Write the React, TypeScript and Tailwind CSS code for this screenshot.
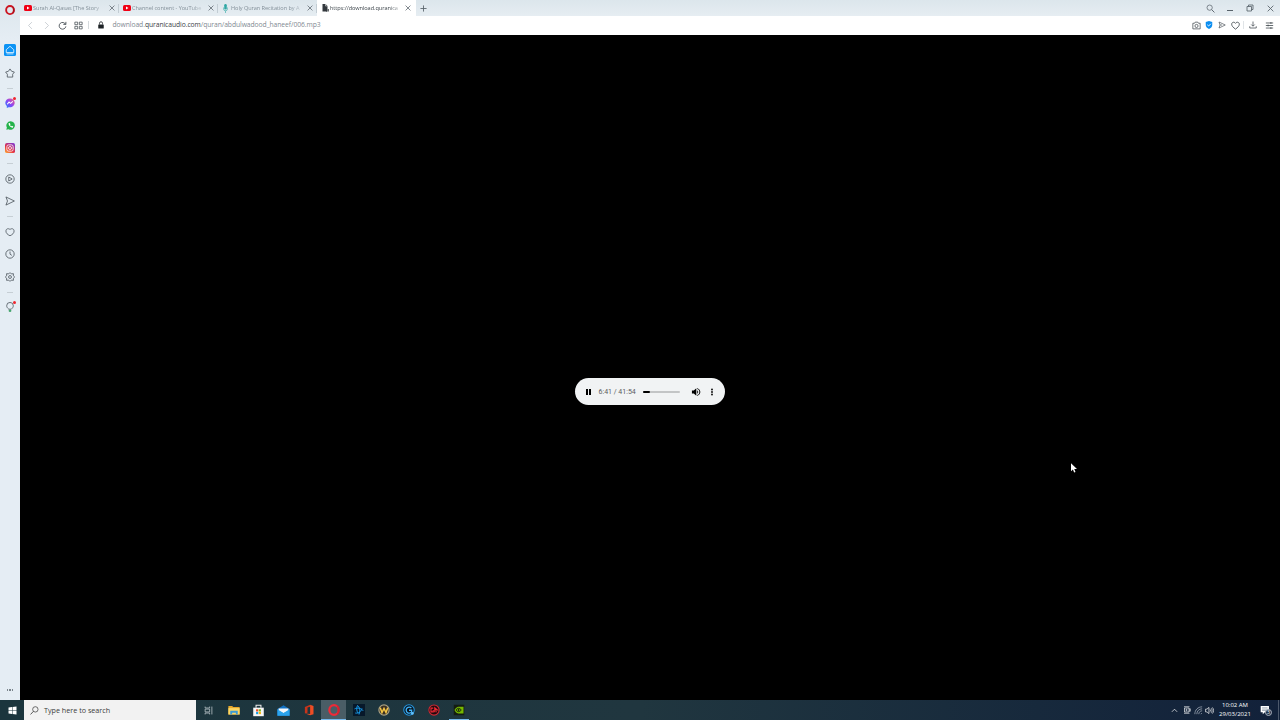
import type { ReactNode } from "react";

const SEGOE = "font-['Open_Sans','Noto_Sans',sans-serif]";

type IconProps = {
  size?: number;
  className?: string;
  children: ReactNode;
};

/** Outline icon on a 16 unit grid */
function Icon({ size = 10, className = "", children }: IconProps) {
  return (
    <svg
      width={size}
      height={size}
      viewBox="0 0 16 16"
      fill="none"
      stroke="currentColor"
      strokeWidth="1.3"
      className={`shrink-0 ${className}`}
    >
      {children}
    </svg>
  );
}

/** Opera "O" */
function OperaLogo({ size = 10, bright = false }: { size?: number; bright?: boolean }) {
  return (
    <Icon size={size}>
      <ellipse
        cx="8"
        cy="8"
        rx="6.2"
        ry="6.5"
        stroke={bright ? "#ee2a38" : "#cc1420"}
        strokeWidth="3"
      />
      <path
        stroke="none"
        fill={bright ? "#c41c29" : "#9c0c17"}
        opacity="0.6"
        d="M11.500 1C13.900 2 15.700 4.800 15.700 8s-1.800 6-4.200 7c1-2 1.300-4.500 1.300-7s-.300-5-1.300-7Z"
      />
    </Icon>
  );
}

function YoutubeIcon() {
  return (
    <svg width="8" height="6" viewBox="0 0 16 12" className="shrink-0">
      <rect width="16" height="12" rx="3" fill="#f00014" />
      <path d="M6 3.200v5.600L11 6Z" fill="#fff" />
    </svg>
  );
}

function MicIcon() {
  return (
    <svg width="5" height="9" viewBox="0 0 10 18" className="ml-px shrink-0">
      <rect x="2.500" y="0" width="5" height="11" rx="2.500" fill="#2fa7a4" />
      <path d="M1 7v2.500a4 4 0 0 0 8 0V7M5 13.500V18" stroke="#4bb3b0" strokeWidth="1.400" fill="none" />
    </svg>
  );
}

function FileIcon() {
  return (
    <svg width="7" height="8" viewBox="0 0 14 16" className="ml-px shrink-0">
      <path d="M1 0h6l4 4v11H1Z" fill="#33383d" />
      <path d="M7 0v4h4" stroke="#fff" strokeWidth="1" fill="none" />
      <path d="M9 9v6M12.500 10v5" stroke="#33383d" strokeWidth="2" />
    </svg>
  );
}

function CloseIcon({ size = 6 }: { size?: number }) {
  return (
    <Icon size={size} className="text-[#59636b]">
      <path d="M1.500 1.500l13 13M14.500 1.500l-13 13" strokeWidth="2" />
    </Icon>
  );
}

const tabs = [
  { title: "Surah Al-Qasas [The Story", icon: <YoutubeIcon /> },
  { title: "Channel content - YouTube", icon: <YoutubeIcon /> },
  { title: "Holy Quran Recitation by A", icon: <MicIcon /> },
  { title: "https://download.quranica", icon: <FileIcon />, active: true },
];

function TabBar() {
  return (
    <div className="flex h-4 items-center bg-linear-to-b from-[#dce6ec] to-[#e6edf2] text-[#59636b]">
      {tabs.map((tab) => (
        <div
          key={tab.title}
          className={`flex h-full w-[99px] shrink-0 items-center pl-1 ${
            tab.active ? "bg-white text-[#3e464c]" : "text-[#839099]"
          }`}
        >
          <div className="flex w-[9px] shrink-0 items-center">{tab.icon}</div>
          <div className="w-[74px] shrink-0 text-[5.6px] leading-4 tracking-[-0.01em] whitespace-nowrap mask-r-from-80%">
            {tab.title}
          </div>
          <div className={`ml-auto flex ${tab.active ? "pr-[5px]" : "pr-[3.5px]"}`}>
            <CloseIcon />
          </div>
          {!tab.active && <div className="h-[9px] w-px shrink-0 bg-[#c3cdd4]" />}
        </div>
      ))}
      <Icon size={7} className="ml-1">
        <path d="M8 1v14M1 8h14" strokeWidth="2" />
      </Icon>
      <div className="ml-auto flex items-center">
        <Icon size={9} className="mr-[12.5px]">
          <circle cx="6.500" cy="6.500" r="4.700" />
          <path d="M10 10l5 5" strokeWidth="1.700" />
        </Icon>
        <div className="mt-[5px] mr-[13px] h-px w-[6px] bg-[#59636b]" />
        <Icon size={8} className="mr-[13px]">
          <path d="M2 5h9v9H2ZM5 5V2h9v9h-3" strokeWidth="1.700" />
        </Icon>
        <div className="mr-[6px]">
          <CloseIcon size={7} />
        </div>
      </div>
    </div>
  );
}

function AddressBar() {
  return (
    <div className="flex h-[19px] items-center bg-white pb-px text-[#3f474d]">
      <Icon size={9} className="ml-[6px] text-[#b9c0c5]">
        <path d="M10.500 2l-6 6 6 6" />
      </Icon>
      <Icon size={9} className="ml-[7px] text-[#b9c0c5]">
        <path d="M5.500 2l6 6-6 6" />
      </Icon>
      <Icon size={9} className="ml-[6.5px]">
        <path d="M13.500 6A6 6 0 1 0 14 9.500M14 1.500V6H9.500" strokeWidth="1.500" />
      </Icon>
      <Icon size={9} className="ml-[7px]">
        <path d="M1.500 2h5v4.500h-5ZM9.500 2h5v4.500h-5ZM1.500 9.500h5V14h-5ZM9.500 9.500h5V14h-5Z" />
      </Icon>
      <div className="ml-[5px] h-2 w-px bg-[#d5dadd]" />
      <Icon size={8} className="ml-2 text-[#1d2226]">
        <rect x="2.500" y="7" width="11" height="8" rx="1" fill="currentColor" stroke="none" />
        <path d="M5 7V4.500a3 3 0 0 1 6 0V7" strokeWidth="1.600" />
      </Icon>
      <div className="ml-2 text-[6.75px] leading-4 tracking-[-0.010em] whitespace-nowrap text-[#7f8a92]">
        download.<span className="text-[#3a4146]">quranicaudio.com</span>
        /quran/abdulwadood_haneef/006.mp3
      </div>
      <div className="ml-auto flex items-center pr-[6px]">
        <Icon size={9}>
          <path d="M1.500 4h3l1.200-2h4.600l1.200 2h3v10h-13Z" />
          <circle cx="8" cy="8.800" r="2.800" />
        </Icon>
        <Icon size={8} className="ml-1">
          <path d="M8 0l6.500 2v6c0 4-3 6.500-6.500 8C4.500 14.500 1.500 12 1.500 8V2Z" fill="#0a8df0" stroke="none" />
          <path d="M4.500 7.500L7.200 10l4.500-4.500" stroke="#fff" strokeWidth="1.800" />
        </Icon>
        <Icon size={8} className="ml-[5px]">
          <path d="M2 2l12.500 6L2 14l2-6ZM4 8h4" />
        </Icon>
        <Icon size={9} className="ml-[5px]">
          <path d="M8 14.500C4 11.500 1.200 9 1.200 5.700 1.200 2 6 .800 8 4.200 10 .800 14.800 2 14.800 5.700 14.800 9 12 11.500 8 14.500Z" strokeWidth="1.500" />
        </Icon>
        <div className="ml-[3px] h-2 w-px bg-[#e0e4e7]" />
        <Icon size={8} className="ml-[5px]">
          <path d="M8 1v9M4.500 7L8 10.500 11.500 7M1.500 10.500V14h13v-3.500" strokeWidth="1.500" />
        </Icon>
        <Icon size={9} className="ml-2">
          <path d="M1.500 3.500h13M1.500 8h13M1.500 12.500h13" strokeWidth="1.400" />
          <path d="M10.500 2v3M5.500 6.500v3M10.500 11v3" strokeWidth="1.600" />
        </Icon>
      </div>
    </div>
  );
}

function HomeButton() {
  return (
    <div className="flex size-3 items-center justify-center rounded-[1.5px] bg-[#0b93f5] text-white">
      <Icon size={10}>
        <path d="M2 7.500L8 2l6 5.500V12H2ZM2.500 14.200h11" strokeWidth="1.200" />
      </Icon>
    </div>
  );
}

function Messenger() {
  return (
    <div className="relative">
      <Icon size={10}>
        <defs>
          <linearGradient id="msgr" x1="0" y1="1" x2="1" y2="0">
            <stop offset="0" stopColor="#1b83ff" />
            <stop offset="0.5" stopColor="#8c45f5" />
            <stop offset="1" stopColor="#ff5c78" />
          </linearGradient>
        </defs>
        <path
          d="M8 .800C3.500.800.500 4 .500 7.700c0 2.100.900 3.900 2.400 5.200V16l2.600-1.400c5 1.400 10-1.800 10-6.900C15.500 4 12.500.800 8 .800Z"
          fill="url(#msgr)"
          stroke="none"
        />
        <path d="M3.500 10l3-3.500 2.500 2 3.500-3" stroke="#fff" strokeWidth="1.700" />
      </Icon>
      <span className="absolute -top-px -right-px size-[3px] rounded-full bg-[#f0252f]" />
    </div>
  );
}

function Whatsapp() {
  return (
    <Icon size={9}>
      <path d="M8 .500a7.500 7.500 0 1 1-3.500 14L.500 15.500l1.100-3.800A7.500 7.500 0 0 1 8 .500Z" fill="#25b34b" stroke="none" />
      <path d="M4.500 4c0 4.500 3.500 7.500 7.500 8l1-2.200-2.500-1.300-1 1C8.300 9 7.500 8.200 7 7l1-1-1.200-2.500Z" fill="#fff" stroke="none" />
    </Icon>
  );
}

function Instagram() {
  return (
    <Icon size={10}>
      <defs>
        <linearGradient id="insta" x1="0" y1="1" x2="0.700" y2="0">
          <stop offset="0" stopColor="#fdb53c" />
          <stop offset="0.450" stopColor="#e6333f" />
          <stop offset="1" stopColor="#8a35c2" />
        </linearGradient>
      </defs>
      <rect x="0" y="0" width="16" height="16" rx="3" fill="url(#insta)" stroke="none" />
      <rect x="3" y="3" width="10" height="10" rx="2.800" stroke="#fff" />
      <circle cx="8" cy="8" r="2.400" stroke="#fff" />
    </Icon>
  );
}

const sidebarGroups: ReactNode[][] = [
  [
    <HomeButton />,
    <Icon size={10}>
      <path d="M8 1.500l2.500 3.700 4.500 1.300-2.800 3.500.2 4.500H3.600l.2-4.500L1 6.500l4.500-1.300Z" />
    </Icon>,
  ],
  [<Messenger />, <Whatsapp />, <Instagram />],
  [
    <Icon size={10}>
      <circle cx="8" cy="8" r="6.700" />
      <path d="M6 4.800L11.500 8 6 11.200Z" />
    </Icon>,
    <Icon size={10}>
      <path d="M1.500 1.500L15 8 1.500 14.500 4 8Z" />
    </Icon>,
  ],
  [
    <Icon size={10}>
      <path d="M8 14C4 12 1.500 10 1.500 6.500 1.500 3 5 1.500 8 4c3-2.500 6.500-1 6.500 2.500C14.500 10 12 12 8 14Z" />
    </Icon>,
    <Icon size={10}>
      <circle cx="8" cy="8" r="6.700" />
      <path d="M8 4v4.200l3 2" />
    </Icon>,
    <Icon size={10}>
      <path d="M8 1l2 2 3.500-.300L13.300 6 15.500 8l-2.200 2 .2 3.300L10 13l-2 2-2-2-3.500.300.2-3.300L.500 8l2.200-2-.2-3.300L6 3Z" />
      <circle cx="8" cy="8" r="2.300" />
    </Icon>,
  ],
  [
    <div className="relative">
      <Icon size={10}>
        <path d="M6 11.500C3.800 9.500 2.700 8 2.700 6a5.300 5.300 0 0 1 10.600 0c0 2-1.100 3.500-3.300 5.500Z" />
        <path d="M6.500 13h3v2h-3Z" fill="#3a7" stroke="#395" strokeWidth="1" />
      </Icon>
      <span className="absolute -top-px -right-px size-[3px] rounded-full bg-[#f0252f]" />
    </div>,
  ],
];

function Sidebar() {
  return (
    <div className="flex w-5 shrink-0 flex-col items-center bg-[#e5edf4] text-[#4c555c]">
      <div className="flex h-[39px] w-full justify-center bg-linear-to-b from-[#dce6ec] to-[#e5edf4] pt-[5px]">
        <OperaLogo />
      </div>
      {sidebarGroups.map((group, i) => (
        <div key={i} className="flex flex-col items-center">
          {i > 0 && (
            <div className="flex h-2 items-center">
              <div className="h-px w-[6px] bg-[#c6ced4]" />
            </div>
          )}
          {group.map((item, j) => (
            <div key={j} className="flex h-[22.5px] items-center">
              {item}
            </div>
          ))}
        </div>
      ))}
      <div className="mt-auto mb-[9.5px] flex gap-[1.5px]">
        <span className="size-[1.2px] bg-[#7a848b]" />
        <span className="size-[1.2px] bg-[#7a848b]" />
        <span className="size-[1.2px] bg-[#7a848b]" />
      </div>
    </div>
  );
}

function AudioPlayer() {
  return (
    <div className="flex h-[27px] w-[150px] items-center rounded-full bg-[#f1f3f4] font-['Roboto','Liberation_Sans',sans-serif]">
      <div className="ml-[11px] flex gap-[1.5px]">
        <span className="h-[6px] w-[1.75px] bg-black" />
        <span className="h-[6px] w-[1.75px] bg-black" />
      </div>
      <div className="mt-px ml-[7.5px] w-[38px] text-[7px] whitespace-nowrap text-[#5a5d60]">
        6:41 / 41:54
      </div>
      <div className="ml-[6.5px] h-[2px] w-[36.5px] rounded-full bg-[#c3c5c6]">
        <div className="h-full w-[19%] rounded-full bg-black" />
      </div>
      <Icon size={10} className="ml-[11px] text-black">
        <path d="M1.500 5.500h3L8.500 2v12l-4-3.500h-3Z" fill="currentColor" stroke="none" />
        <path d="M10 5.200c2 1 2 4.600 0 5.600" fill="currentColor" stroke="none" />
        <path d="M10 2.500c5.500 1.500 5.500 9.500 0 11" strokeWidth="1.500" />
      </Icon>
      <Icon size={8} className="ml-[7px] text-black">
        <circle cx="8" cy="3" r="1.800" fill="currentColor" stroke="none" />
        <circle cx="8" cy="8" r="1.800" fill="currentColor" stroke="none" />
        <circle cx="8" cy="13" r="1.800" fill="currentColor" stroke="none" />
      </Icon>
    </div>
  );
}

const taskbarApps: { name: string; icon: ReactNode; focused?: boolean; open?: boolean }[] = [
  {
    name: "task-view",
    icon: (
      <Icon size={9} className="text-[#c5cfd3]">
        <path d="M2 1v2.500h8V1M2 5.500h8v5H2ZM2 15v-2.500h8V15M14 1v14" />
      </Icon>
    ),
  },
  {
    name: "explorer",
    icon: (
      <Icon size={12}>
        <path d="M.500 2.500h5l1.500 1.500h8.500v10H.500Z" fill="#e9a92c" stroke="none" />
        <path d="M.500 5.500h15v8.500H.500Z" fill="#fbd765" stroke="none" />
        <path d="M3 14V9h10v5h-2.500v-2.500h-5V14Z" fill="#3b9ad6" stroke="none" />
      </Icon>
    ),
  },
  {
    name: "store",
    icon: (
      <Icon size={13}>
        <path d="M1.500 4.500h13V15h-13Z" fill="#f6f6f6" stroke="none" />
        <path d="M5 4.500V1.500h6v3" stroke="#eee" />
        <path d="M5 6.500h2.700v2.700H5Z" fill="#e84c25" stroke="none" />
        <path d="M8.300 6.500H11v2.700H8.300Z" fill="#7cb518" stroke="none" />
        <path d="M5 9.800h2.700v2.700H5Z" fill="#17a1e6" stroke="none" />
        <path d="M8.300 9.800H11v2.700H8.300Z" fill="#f8b50a" stroke="none" />
      </Icon>
    ),
  },
  {
    name: "mail",
    icon: (
      <Icon size={13}>
        <path d="M.500 6L8 1.500 15.500 6v8.500H.500Z" fill="#1272c4" stroke="none" />
        <path d="M2 5.500h12v3l-6 3-6-3Z" fill="#f3f8fc" stroke="none" />
        <path d="M.500 6.500L8 11l7.500-4.500v8H.500Z" fill="#2aa3ec" stroke="none" />
      </Icon>
    ),
  },
  {
    name: "office",
    icon: (
      <Icon size={12}>
        <path d="M2.500 4L9.500 1v2.500L6 4.500v7l-3.500 1.300Z" fill="#c8341a" stroke="none" />
        <path d="M9.500 1l4.500 1.500v11L9.500 15 3 12.800l6.500.5Z" fill="#ee4d24" stroke="none" />
      </Icon>
    ),
  },
  { name: "opera", icon: <OperaLogo size={12} bright />, focused: true, open: true },
  {
    name: "battle-net",
    icon: (
      <Icon size={12}>
        <rect width="16" height="16" fill="#07182a" stroke="none" />
        <path d="M6 2c3 2 4 7 2 12M2 6.500c4-2 9-1 11.500 2.500M3 12c4 1 8-2 9-6M6 2c-2 4-1 8 1 10.500" stroke="#1699e8" strokeWidth="1.300" />
      </Icon>
    ),
  },
  {
    name: "wow",
    icon: (
      <Icon size={12}>
        <circle cx="8" cy="8" r="6.800" fill="#3b3021" stroke="#aaa183" strokeWidth="1.600" />
        <path d="M3 5l2.300 6.500L8 6l2.700 5.500L13 5" stroke="#f4c545" strokeWidth="2" />
      </Icon>
    ),
  },
  {
    name: "logitech",
    icon: (
      <Icon size={12}>
        <circle cx="8" cy="8" r="7" fill="#08131d" stroke="#2495df" strokeWidth="1.400" />
        <path d="M11.200 5.500A4 4 0 1 0 11.500 10.500V8.300H8" stroke="#42b4fa" strokeWidth="1.800" />
        <circle cx="12.500" cy="12.500" r="1.800" fill="#64c4ff" stroke="none" />
      </Icon>
    ),
  },
  {
    name: "dragon",
    icon: (
      <Icon size={12}>
        <circle cx="8" cy="8" r="6.800" fill="#1d0b0e" stroke="#d62833" strokeWidth="1.400" />
        <path d="M7 5.500H4v5h3V8M9 11V5l3.500 3H9M11 9.500v1.500" stroke="#ec2934" strokeWidth="1.500" />
      </Icon>
    ),
  },
  {
    name: "nvidia",
    open: true,
    icon: (
      <Icon size={12}>
        <rect x="1" y="1" width="14" height="14" fill="#141d12" stroke="none" />
        <path d="M2 8c2-4 5-4.500 6-4.500h6v9H7C4.500 12 3 10.500 2 8Z" fill="#76b900" stroke="none" />
        <path d="M4 8c2-3 5-3 7 0-2 3-5 3-7 0Z" stroke="#16220a" />
        <circle cx="7.500" cy="8" r="1.200" fill="#16220a" stroke="none" />
      </Icon>
    ),
  },
];

function Taskbar() {
  return (
    <div className="flex h-5 items-center bg-linear-to-r from-[#1b353d] via-[#20363f] via-50% to-[#12213a] text-white">
      <div className="flex w-6 justify-center">
        <svg width="9" height="9" viewBox="0 0 18 18" fill="#fff">
          <path d="M1 3l7-1v6.500H1ZM9 2l8-1v7.500H9ZM1 9.500h7V16l-7-1ZM9 9.500h8V17l-8-1Z" />
        </svg>
      </div>
      <div className="mr-[0.5px] flex h-full w-[171.5px] items-center bg-[#f2f2f2] text-[#3d3d3d]">
        <Icon size={9} className="ml-[6px]">
          <circle cx="9.500" cy="6" r="4.800" />
          <path d="M6 9.500L1 15" strokeWidth="1.500" />
        </Icon>
        <span className="ml-[5px] text-[7.2px] leading-5 whitespace-nowrap">Type here to search</span>
      </div>
      {taskbarApps.map((app) => (
        <div
          key={app.name}
          className={`flex h-full w-[25px] flex-col items-center ${app.focused ? "bg-[#4a5d66]" : ""}`}
        >
          <div className="flex flex-1 items-center pt-px">{app.icon}</div>
          <div
            className={`h-px ${app.focused ? "w-full" : "w-5"} ${app.open ? "bg-[#76b9ed]" : ""}`}
          />
        </div>
      ))}
      <div className="ml-auto flex h-full items-center">
        <Icon size={7}>
          <path d="M2 11l6-6 6 6" strokeWidth="1.600" />
        </Icon>
        <Icon size={8} className="ml-[4.5px]">
          <path d="M2 1.500h11M2 14.500h11M3 4h9v8H3ZM12 6.500l2.500-1v5l-2.500-1" />
          <circle cx="7" cy="8" r="1.300" />
        </Icon>
        <Icon size={9} className="ml-[3px] text-[#a9b2bf]">
          <path d="M1.500 14.500C1.500 7 7 1.500 14.500 1.500M5 14.500C5 9 9 5 14.500 5M8.500 14.500c0-3.500 2.500-6 6-6M12 14.500l2-2" />
        </Icon>
        <Icon size={9} className="ml-[2.5px]">
          <path d="M1 5.500h2.500L7 2.500v11l-3.500-3H1ZM9 6c1 1 1 3 0 4M11 4c2 2 2 6 0 8M13 2.500c3 3 3 8 0 11" strokeWidth="1.200" />
        </Icon>
        <div className="ml-[3px] flex w-[36px] flex-col items-center text-[6px] leading-[9px] whitespace-nowrap">
          <span>10:02 AM</span>
          <span>29/03/2021</span>
        </div>
        <div className="relative ml-[7px]">
          <Icon size={11}>
            <path d="M1 1.500h12v9H7L4 13.500v-3H1Z" fill="#fff" stroke="none" />
            <path d="M3 4h8M3 6h8M3 8h6" stroke="#6d7b8b" strokeWidth=".800" />
          </Icon>
          <span className="absolute top-[4px] left-[5px] flex size-[7px] items-center justify-center rounded-full border-[0.5px] border-[#aab3bf] bg-[#25344a] text-[5px] leading-none">
            3
          </span>
        </div>
        <div className="ml-[7px] mr-px h-full w-px bg-[#4c586b]" />
      </div>
    </div>
  );
}

export default function App() {
  return (
    <div className={`relative flex h-[720px] w-[1280px] flex-col overflow-hidden bg-black ${SEGOE}`}>
      <div className="flex min-h-0 flex-1">
        <Sidebar />
        <div className="flex min-w-0 flex-1 flex-col">
          <TabBar />
          <AddressBar />
          {/** Page content, media document with a centered player */}
          <div className="flex flex-1 items-center justify-center pt-12">
            <AudioPlayer />
          </div>
        </div>
      </div>
      <Taskbar />

      {/** Mouse pointer */}
      <svg width="6" height="10" viewBox="0 0 12 19" className="absolute top-[462.5px] left-[1071px]">
        <path d="M0 0v16l3.800-3.500L6.300 18.500l2.700-1.200L6.500 11.500H12Z" fill="#fff" />
      </svg>
    </div>
  );
}
